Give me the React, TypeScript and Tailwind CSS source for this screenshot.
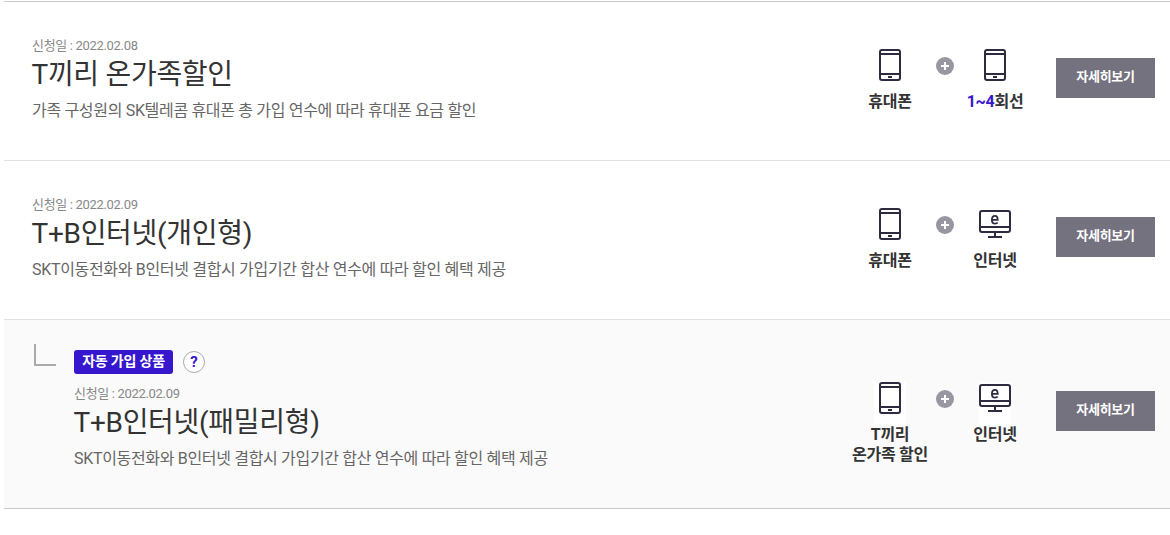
import { Fragment } from 'react';
import type { ReactNode } from 'react';

type IconName = 'phone' | 'internet';

interface ProductItem {
  icon: IconName;
  label: ReactNode;
}

interface Product {
  id: number;
  date: string;
  name: string;
  description: string;
  auto?: boolean;
  items: ProductItem[];
}

const products: Product[] = [
  {
    id: 1,
    date: '2022.02.08',
    name: 'T끼리 온가족할인',
    description: '가족 구성원의 SK텔레콤 휴대폰 총 가입 연수에 따라 휴대폰 요금 할인',
    items: [
      { icon: 'phone', label: '휴대폰' },
      { icon: 'phone', label: <><span className="text-[#3617ce]">1~4</span>회선</> },
    ],
  },
  {
    id: 2,
    date: '2022.02.09',
    name: 'T+B인터넷(개인형)',
    description: 'SKT이동전화와 B인터넷 결합시 가입기간 합산 연수에 따라 할인 혜택 제공',
    items: [
      { icon: 'phone', label: '휴대폰' },
      { icon: 'internet', label: '인터넷' },
    ],
  },
  {
    id: 3,
    date: '2022.02.09',
    name: 'T+B인터넷(패밀리형)',
    description: 'SKT이동전화와 B인터넷 결합시 가입기간 합산 연수에 따라 할인 혜택 제공',
    auto: true,
    items: [
      { icon: 'phone', label: <>T끼리<br />온가족 할인</> },
      { icon: 'internet', label: '인터넷' },
    ],
  },
];

function PhoneIcon() {
  return (
    <svg width="32" height="43" viewBox="0 0 32 43" fill="none" stroke="#2e2a3f" strokeWidth="2" className="bg-white">
      <rect x="6" y="1" width="20" height="30" rx="2" />
      <path d="M6 5h20M6 25h20" />
      <path d="M14 28h4" />
    </svg>
  );
}

function InternetIcon() {
  return (
    <svg width="32" height="43" viewBox="0 0 32 43" fill="none" stroke="#2e2a3f" strokeWidth="2" className="bg-white">
      <rect x="1" y="3" width="30" height="21" rx="2" />
      <path d="M1 19h30M16 24v4M9 29h14" />
      <path
        d="M13 11.900h5.700c0-2.600-.9-4-2.700-4-1.900 0-3.100 1.600-3.100 4s1.300 3.700 3.300 3.700c1 0 1.900-.3 2.500-.9"
        strokeWidth="1.800"
      />
    </svg>
  );
}

function PlusIcon() {
  return (
    <svg width="18" height="18" viewBox="0 0 18 18" className="mt-2">
      <circle cx="9" cy="9" r="9" fill="#9896a0" />
      <path d="M9 5v8M5 9h8" stroke="#fff" strokeWidth="2" />
    </svg>
  );
}

function ProductRow({ product }: { product: Product }) {
  return (
    <li
      className={
        product.auto
          ? 'flex h-[189px] items-start border-b border-[#c8c8c8] bg-[#fafafa] pt-[15px]'
          : 'flex h-[159px] items-start border-b border-[#e1e1e1]'
      }
    >
      {product.auto && <div className="mt-[9px] ml-[30px] h-[22px] w-[22px] border-b-2 border-l-2 border-[#aaa]" />}

      <div className={product.auto ? 'ml-[18px] flex-1 pt-[15px]' : 'ml-7 flex-1 pt-[34px]'}>
        {product.auto && (
          <div className="mb-[10px] flex items-center gap-[10px]">
            <span className="h-6 w-[99px] rounded-[3px] bg-[#3617ce] text-center text-[14px] leading-[22px] font-bold tracking-[-0.2px] text-white">
              자동 가입 상품
            </span>
            <button className="h-[22px] w-[22px] rounded-full border border-[#aaa] bg-white text-[15px] leading-5 font-bold text-[#3617ce]">
              ?
            </button>
          </div>
        )}
        <p className="text-[13px] leading-5 tracking-[-0.32px] text-[#888]">신청일 : {product.date}</p>
        <h3 className="-ml-[0.5px] text-[28px] leading-[38px] tracking-[-0.3px] text-[#333]">{product.name}</h3>
        <p className="mt-[5px] text-[16px] leading-6 tracking-[-0.32px] text-[#666]">{product.description}</p>
      </div>

      <div className="mt-[47px] flex w-[158px] shrink-0">
        {product.items.map((item, i) => (
          <Fragment key={i}>
            {i > 0 && <div className="w-[18px] shrink-0"><PlusIcon /></div>}
            <div className={i === 0 ? 'flex w-[92px] shrink-0 flex-col items-center' : 'flex w-[82px] shrink-0 flex-col items-center'}>
              {item.icon === 'phone' ? <PhoneIcon /> : <InternetIcon />}
              <p className="text-center text-[16px] leading-5 font-bold tracking-[-0.3px] whitespace-nowrap text-[#333]">
                {item.label}
              </p>
            </div>
          </Fragment>
        ))}
      </div>

      <button className="mt-14 mr-[15px] ml-[54px] h-10 w-[99px] shrink-0 bg-[#757280] pb-[2px] text-[13px] font-bold tracking-[-0.3px] text-white">
        자세히보기
      </button>
    </li>
  );
}

export default function App() {
  return (
    <div className="min-h-screen bg-white pt-px pl-1 font-[Roboto,'Noto_Sans_CJK_KR',sans-serif]">
      <ul className="border-t border-[#c8c8c8]">
        {products.map(product => (
          <ProductRow key={product.id} product={product} />
        ))}
      </ul>
    </div>
  );
}
